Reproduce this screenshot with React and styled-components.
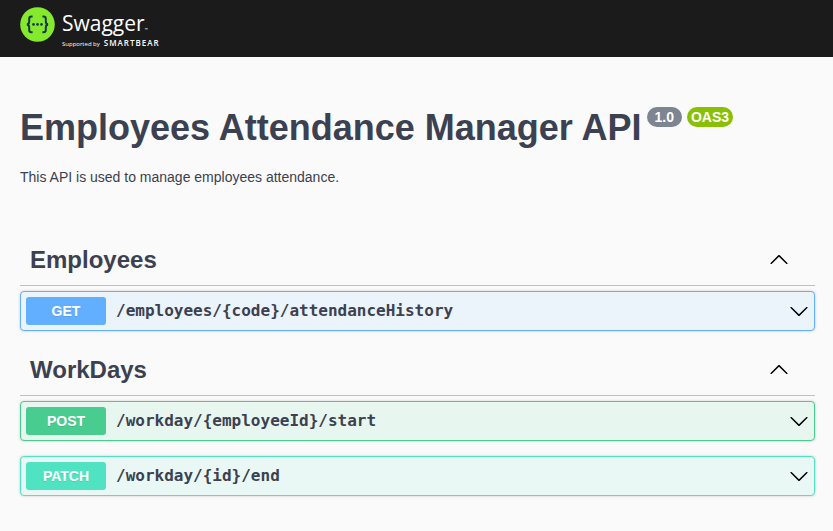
import React, { useState } from "react";
import styled, { createGlobalStyle } from "styled-components";

const GlobalStyle = createGlobalStyle`
  *, *::before, *::after { box-sizing: border-box; }
  body {
    margin: 0;
    background: #fafafa;
    color: #3b4151;
    font-family: "Liberation Sans", Arial, sans-serif;
  }
  button { font: inherit; color: inherit; cursor: pointer; }
`;

const Topbar = styled.header`
  display: flex;
  height: 57px;
  padding: 7px 20px;
  background: #1b1b1b;
`;

const LogoLink = styled.a`
  display: flex;
  gap: 7px;
  color: #fff;
  text-decoration: none;
  font-family: "Open Sans", sans-serif;
`;

const Emblem = styled.svg`
  display: block;
  width: 35px;
  height: 35px;
`;

const Wordmark = styled.span`
  display: flex;
  flex-direction: column;
`;

const BrandName = styled.span`
  display: flex;
  align-items: baseline;
  height: 32px;
  font-size: 21px;
  font-weight: 400;
  line-height: 32px;
`;

const Trademark = styled.span`
  font-size: 4px;
  line-height: 4px;
`;

const Byline = styled.span`
  display: flex;
  align-items: baseline;
  gap: 4px;
  height: 8px;
  font-size: 6px;
  line-height: 8px;
  white-space: nowrap;
`;

const Sponsor = styled.b`
  font-size: 8px;
  letter-spacing: 1px;
  font-weight: 600;
`;

const Page = styled.main`
  padding: 50px 18px 20px 20px;
`;

const Info = styled.section`
  margin-bottom: 50px;
`;

const Title = styled.h1`
  display: flex;
  align-items: flex-start;
  gap: 5px;
  margin: 0 0 20px;
  font-size: 36px;
  line-height: 42px;
`;

const Badge = styled.small`
  height: 20px;
  padding: 0 ${(p) => p.$pad}px;
  border-radius: 20px;
  background: ${(p) => p.$color};
  color: #fff;
  font-size: 14px;
  line-height: 20px;
`;

const Description = styled.p`
  margin: 0;
  font-size: 14px;
  line-height: 17px;
`;

const TagHeading = styled.h2`
  margin: 0 0 5px;
  border-bottom: 1px solid #bfc0c4;
`;

const TagToggle = styled.button`
  display: flex;
  align-items: center;
  justify-content: space-between;
  width: 100%;
  height: 49px;
  padding: 0 26px 2px 10px;
  border: 0;
  background: none;
  font-size: 24px;
  line-height: 28px;
  text-align: left;
`;

const Operation = styled.button`
  display: flex;
  align-items: center;
  gap: 10px;
  width: 100%;
  margin: 0 0 15px;
  padding: 5px;
  border: 1px solid ${(p) => p.$tone.main};
  border-radius: 4px;
  background: ${(p) => p.$tone.tint};
  box-shadow: 0 0 3px rgba(0, 0, 0, 0.19);
  text-align: left;
`;

const Method = styled.span`
  width: 80px;
  border-radius: 3px;
  background: ${(p) => p.$tone.main};
  color: #fff;
  font-size: 14px;
  font-weight: 700;
  line-height: 28px;
  text-align: center;
  text-shadow: 0 1px 0 rgba(0, 0, 0, 0.1);
`;

const Path = styled.span`
  flex: 1;
  min-width: 0;
  font-family: "DejaVu Sans Mono", monospace;
  font-size: 16px;
  font-weight: 600;
  line-height: 20px;
  overflow-wrap: anywhere;
`;

const Arrow = styled.svg`
  display: block;
  flex: none;
  width: 20px;
  height: 20px;
  fill: #000;
`;

const tones = {
  GET: { main: "#61affe", tint: "#ebf3fb" },
  POST: { main: "#49cc90", tint: "#e8f6f0" },
  PATCH: { main: "#50e3c2", tint: "#e9f8f5" },
};

const tags = [
  {
    name: "Employees",
    operations: [{ method: "GET", path: "/employees/{code}/attendanceHistory" }],
  },
  {
    name: "WorkDays",
    operations: [
      { method: "POST", path: "/workday/{employeeId}/start" },
      { method: "PATCH", path: "/workday/{id}/end" },
    ],
  },
];

const arrowDown =
  "M17.418 6.109c.272-.268.709-.268.979 0s.271.701 0 .969l-7.908 7.83c-.27.268-.707.268-.979 0l-7.908-7.83c-.27-.268-.27-.701 0-.969.271-.268.709-.268.979 0L10 13.25l7.418-7.141z";
const arrowUp =
  "M17.418 13.908c.272.268.709.268.979 0s.271-.701 0-.969l-7.908-7.83c-.27-.268-.707-.268-.979 0l-7.908 7.83c-.27.268-.27.701 0 .969.271.268.709.268.979 0L10 6.767l7.418 7.141z";

function Chevron({ up }) {
  return (
    <Arrow viewBox="0 0 20 20" aria-hidden="true">
      <path d={up ? arrowUp : arrowDown} />
    </Arrow>
  );
}

function Logo() {
  return (
    <LogoLink href="#" aria-label="Swagger, supported by SmartBear">
      <Emblem viewBox="0 0 35 35" aria-hidden="true">
        <circle cx="17.5" cy="17.5" r="17.3" fill="#85ea2d" />
        <g fill="none" stroke="#173647" strokeWidth="2">
          <path d="M12.6 9.6h-1.1c-1.6 0-2.3.8-2.3 2.3v2.5c0 1.8-.7 2.7-2.2 3 1.5.3 2.2 1.2 2.2 3v2.5c0 1.5.7 2.3 2.3 2.3h1.1" />
          <path d="M22.4 9.6h1.1c1.6 0 2.3.8 2.3 2.3v2.5c0 1.8.7 2.7 2.2 3-1.5.3-2.2 1.2-2.2 3v2.5c0 1.5-.7 2.3-2.3 2.3h-1.1" />
        </g>
        <g fill="#173647">
          <circle cx="13.5" cy="17.4" r="1.3" />
          <circle cx="17.5" cy="17.4" r="1.3" />
          <circle cx="21.5" cy="17.4" r="1.3" />
        </g>
      </Emblem>
      <Wordmark>
        <BrandName>
          Swagger<Trademark>™</Trademark>
        </BrandName>
        <Byline>
          Supported by <Sponsor>SMARTBEAR</Sponsor>
        </Byline>
      </Wordmark>
    </LogoLink>
  );
}

function TagSection({ name, operations }) {
  const [open, setOpen] = useState(true);
  return (
    <section>
      <TagHeading>
        <TagToggle type="button" aria-expanded={open} onClick={() => setOpen(!open)}>
          {name}
          <Chevron up={open} />
        </TagToggle>
      </TagHeading>
      {open &&
        operations.map(({ method, path }) => (
          <Operation key={method + path} type="button" $tone={tones[method]}>
            <Method $tone={tones[method]}>{method}</Method>
            <Path>{path}</Path>
            <Chevron />
          </Operation>
        ))}
    </section>
  );
}

export default function App() {
  return (
    <>
      <GlobalStyle />
      <Topbar>
        <Logo />
      </Topbar>
      <Page>
        <Info>
          <Title>
            Employees Attendance Manager API
            <Badge $color="#7d8492" $pad={8}>1.0</Badge>
            <Badge $color="#89bf04" $pad={4}>OAS3</Badge>
          </Title>
          <Description>This API is used to manage employees attendance.</Description>
        </Info>
        {tags.map((tag) => (
          <TagSection key={tag.name} {...tag} />
        ))}
      </Page>
    </>
  );
}
